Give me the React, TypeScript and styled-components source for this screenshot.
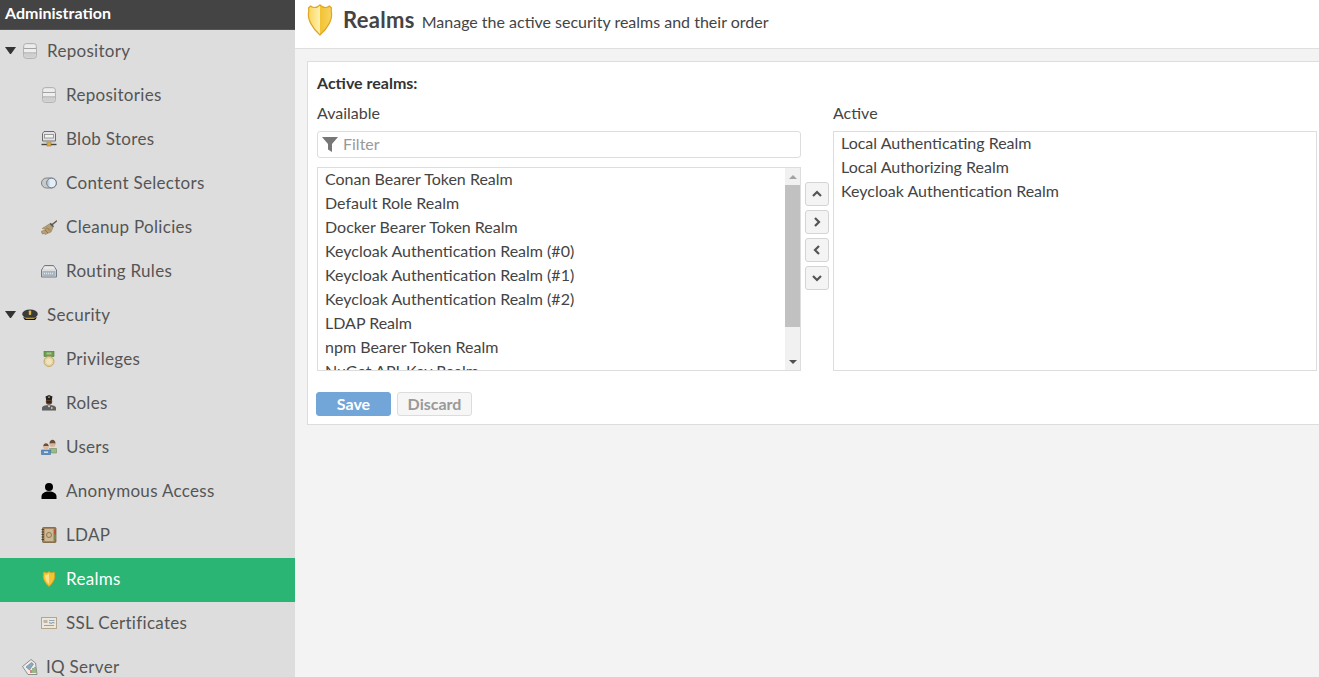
import React from 'react'
import styled, { createGlobalStyle } from 'styled-components'

const GlobalStyle = createGlobalStyle`
  html, body {
    margin: 0;
    height: 100%;
    overflow: hidden;
    background: #f3f3f3;
    font-family: "Lato", "Open Sans", sans-serif;
  }
  * { box-sizing: border-box; }
`

const Page = styled.div`
  display: flex;
  width: 1319px;
  height: 677px;
  overflow: hidden;
`

const Sidebar = styled.nav`
  flex: 0 0 295px;
  height: 677px;
  overflow: hidden;
  background: #dddddd;
`

const SidebarTitle = styled.div`
  height: 30px;
  padding: 0 5px;
  line-height: 25px;
  font-size: 16px;
  font-weight: 700;
  color: #fff;
  background: #444444;
  border-bottom: 1px solid #555;
`

const NavRow = styled.div<{ $depth: number; $active?: boolean }>`
  display: flex;
  align-items: center;
  height: 44px;
  padding-left: ${({ $depth }) => ($depth === 0 ? 5 : 41)}px;
  padding-bottom: 3px;
  font-size: 17px;
  letter-spacing: 0.3px;
  color: ${({ $active }) => ($active ? '#fff' : '#555')};
  background: ${({ $active }) => ($active ? '#2ab574' : 'transparent')};
`

const Caret = styled.span<{ $hidden?: boolean }>`
  flex: 0 0 11px;
  width: 0;
  height: 0;
  margin-right: 6px;
  border-left: 5.5px solid transparent;
  border-right: 5.5px solid transparent;
  border-top: 7px solid ${({ $hidden }) => ($hidden ? 'transparent' : '#333')};
`

const NavIcon = styled.svg`
  flex: 0 0 16px;
  width: 16px;
  height: 16px;
  margin-right: 9px;
`

const TightNavIcon = styled(NavIcon)`
  margin-right: 8px;
`

const Main = styled.main`
  flex: 1;
  min-width: 0;
  display: flex;
  flex-direction: column;
`

const Header = styled.header`
  display: flex;
  align-items: center;
  height: 49px;
  padding: 0 0 8px 12px;
  background: #fff;
  border-bottom: 1px solid #dfdfdf;
`

const HeaderIcon = styled.svg`
  width: 26px;
  height: 32px;
  margin-right: 10px;
`

const Title = styled.h1`
  margin: 0 7px 2px 0;
  font-size: 22px;
  font-weight: 700;
  letter-spacing: 0.3px;
  color: #444;
`

const Subtitle = styled.span`
  font-size: 16px;
  color: #444;
  padding-top: 3px;
`

const Panel = styled.section`
  margin: 12px -6px 0 12px;
  height: 364px;
  padding: 11px 9px 0;
  background: #fff;
  border: 1px solid #dddddd;
`

const SectionTitle = styled.div`
  height: 22px;
  line-height: 19px;
  font-size: 16px;
  font-weight: 700;
  color: #333;
`

const Selector = styled.div`
  display: grid;
  grid-template-columns: 484px 32px 484px;
  margin-top: 8px;
`

const Column = styled.div`
  display: flex;
  flex-direction: column;
`

const FieldLabel = styled.div`
  height: 22px;
  line-height: 20px;
  font-size: 16px;
  color: #444;
`

const FilterBox = styled.div`
  display: flex;
  align-items: center;
  height: 27px;
  margin: 6px 0 9px;
  padding: 0 0 2px 4px;
  border: 1px solid #ddd;
  border-radius: 3px;
  font-size: 16px;
  color: #999;
  background: #fff;
`

const FilterIcon = styled.svg`
  width: 16px;
  height: 16px;
  margin-right: 5px;
`

const ListBox = styled.div<{ $tall?: boolean }>`
  display: flex;
  height: ${({ $tall }) => ($tall ? 240 : 204)}px;
  margin-top: ${({ $tall }) => ($tall ? 6 : 0)}px;
  overflow: hidden;
  border: 1px solid #ddd;
  background: #fff;
`

const ListItems = styled.div`
  flex: 1;
  min-width: 0;
  overflow: hidden;
`

const ListItem = styled.div`
  height: 24px;
  padding-left: 7px;
  line-height: 22px;
  font-size: 16px;
  color: #444;
  white-space: nowrap;
`

const ScrollBar = styled.div`
  flex: 0 0 15px;
  display: flex;
  flex-direction: column;
  background: #f1f1f1;
`

const ScrollArrow = styled.div<{ $down?: boolean }>`
  flex: 0 0 17px;
  display: flex;
  align-items: center;
  justify-content: center;

  &::before {
    content: '';
    width: 0;
    height: 0;
    border-left: 4px solid transparent;
    border-right: 4px solid transparent;
    ${({ $down }) => ($down ? 'border-top: 4px solid #505050;' : 'border-bottom: 4px solid #a3a3a3;')}
  }
`

const ScrollTrack = styled.div`
  flex: 1;
`

const ScrollThumb = styled.div`
  height: 142px;
  background: #c1c1c1;
`

const MoveButtons = styled.div`
  display: flex;
  flex-direction: column;
  gap: 4px;
  padding: 79px 0 0 4px;
`

const MoveButton = styled.button`
  display: flex;
  align-items: center;
  justify-content: center;
  width: 24px;
  height: 24px;
  padding: 0;
  background: #f4f4f4;
  border: 1px solid #d4d4d4;
  border-radius: 3px;
`

const Actions = styled.div`
  display: flex;
  gap: 6px;
  margin: 21px 0 0 -1px;
`

const ActionButton = styled.button<{ $primary?: boolean }>`
  width: 75px;
  height: 24px;
  padding: 0 0 2px;
  font-family: inherit;
  font-size: 16px;
  font-weight: 700;
  color: ${({ $primary }) => ($primary ? '#fff' : '#999')};
  background: ${({ $primary }) => ($primary ? '#72a6d9' : '#f6f6f6')};
  border: 1px solid ${({ $primary }) => ($primary ? '#72a6d9' : '#dcdcdc')};
  border-radius: 3px;
`

const Db = () => (
  <NavIcon viewBox="0 0 16 16">
    <rect x="1.500" y=".5" width="13" height="15" rx="3" fill="#d9d9d9" stroke="#b3b3b3" />
    <rect x="2.500" y="1.500" width="11" height="3.500" rx="1.500" fill="#ececec" />
    <rect x="2" y="6" width="12" height="3.500" fill="#eeeeee" />
    <path d="M2 5.500h12M2 10h12" stroke="#a3a3a3" />
    <rect x="2.500" y="10.500" width="11" height="4" rx="1.500" fill="#cfcfcf" />
  </NavIcon>
)

const Blob = () => (
  <NavIcon viewBox="0 0 16 16">
    <path d="M3 .5h10l1.500 2v7.500h-13V2.500z" fill="#e2e2e2" stroke="#6d6d6d" />
    <rect x="3.500" y="3.500" width="9" height="3.500" fill="#f4f4f4" stroke="#888" strokeWidth=".8" />
    <path d="M.5 13.500h15" stroke="#444" strokeWidth="1.400" />
    <rect x="6" y="11" width="4" height="4" fill="#e2a93c" stroke="#a97a26" strokeWidth=".6" />
    <path d="M2 10.800h12" stroke="#aaa" />
  </NavIcon>
)

const Selectors = () => (
  <NavIcon viewBox="0 0 16 16">
    <rect x=".5" y="3" width="15" height="10" rx="5" fill="#c9c9c9" stroke="#808080" />
    <circle cx="10.500" cy="8" r="4.800" fill="#e6eef5" stroke="#6d7f91" />
    <path d="M8.500 3.500a5 5 0 0 0 0 9" fill="#bcd0e2" stroke="#6d7f91" strokeWidth=".8" />
  </NavIcon>
)

const Broom = () => (
  <NavIcon viewBox="0 0 16 16">
    <path d="M15.800 1 10 5.500l1 1.300L16 2.500z" fill="#6b5a48" />
    <path d="M9.800 3.800 13 7.200l-1 1.200-3.700-3.300z" fill="#4f5866" />
    <path d="M8.300 5 12 8.500 10 13l-6 2.500-1-1.300-1.500 1-1.300-2.800L5.500 10 1.200 9.500z" fill="#b79e73" stroke="#86724f" strokeWidth=".5" />
    <path d="m6 8.500 3 3M4 11l3 3" stroke="#76643f" strokeWidth=".7" />
  </NavIcon>
)

const Routing = () => (
  <NavIcon viewBox="0 0 16 16">
    <path d="M3.500 2.500h9L15.500 7v7H.5V7z" fill="#dcdcdc" stroke="#6f7b88" />
    <path d="M2.500 5h11" stroke="#f4f4f4" />
    <rect x="1.500" y="8" width="13" height="5" fill="#aab4be" />
    <path d="M3 10.500h10" stroke="#e8e8e8" strokeDasharray="1 1" strokeWidth="1.400" />
  </NavIcon>
)

const Cap = () => (
  <NavIcon viewBox="0 0 16 16">
    <ellipse cx="8" cy="7" rx="7.800" ry="4.600" fill="#3a3a3a" />
    <rect x="6.800" y="3.500" width="2.400" height="4.500" rx=".8" fill="#d9b94a" />
    <path d="M1 10.200c2 1 12 1 14 0L13 13H3z" fill="#111" />
    <path d="M3.500 11.300h9" stroke="#d9b94a" strokeWidth="1.100" />
  </NavIcon>
)

const Medal = () => (
  <NavIcon viewBox="0 0 16 16">
    <rect x="3" y="0" width="10" height="5.500" fill="#6c9d50" stroke="#4f7c3c" strokeWidth=".6" />
    <rect x="5.500" y="1.500" width="5" height="2" fill="#a5c58c" />
    <circle cx="8" cy="10.500" r="5" fill="#e6d39b" stroke="#c2a86c" />
    <circle cx="8" cy="10.500" r="3" fill="#efe2bd" />
  </NavIcon>
)

const Officer = () => (
  <NavIcon viewBox="0 0 16 16">
    <path d="M1 15.500v-2.500c0-2 3-3 7-3s7 1 7 3v2.500z" fill="#5f6063" />
    <path d="M1 15h14v1H1z" fill="#9a9a9a" />
    <circle cx="8" cy="6.500" r="3.200" fill="#5a3d2b" />
    <path d="M4.500 1.500 8 0l3.500 1.500-.7 3.500H5.200z" fill="#222" />
    <rect x="7.300" y="1.400" width="1.400" height="1.500" fill="#e2c04a" />
    <path d="M6 7h4" stroke="#111" />
    <path d="M6.500 10.500 8 12.500l1.500-2z" fill="#eee" />
    <rect x="10" y="12" width="1.500" height="2" fill="#e2c04a" />
  </NavIcon>
)

const UsersIcon = () => (
  <NavIcon viewBox="0 0 16 16">
    <path d="M8.500 9.500h7v4.500h-5z" fill="#9cb98b" stroke="#6e8d5c" strokeWidth=".6" />
    <circle cx="11.500" cy="5" r="3" fill="#d8b595" />
    <path d="M8.500 4.500c0-5 6-5 6 0-2-.5-4-.5-6 0z" fill="#6e4d35" />
    <path d="M.5 11h9v4.500h-9z" fill="#5d8fc0" stroke="#3d6c9b" strokeWidth=".6" />
    <rect x="3" y="12.500" width="4" height="1.300" fill="#e9f0f7" />
    <circle cx="5" cy="7.800" r="2.700" fill="#dcbba0" />
    <path d="M2.300 7.300c0-4 5.400-4 5.400 0-1.800-.5-3.600-.5-5.400 0z" fill="#6e4d35" />
  </NavIcon>
)

const Person = () => (
  <NavIcon viewBox="0 0 16 16">
    <circle cx="8" cy="4" r="4" fill="#000" />
    <path d="M.5 16v-2.500C.5 10.500 3.500 8.500 8 8.500s7.500 2 7.500 5V16z" fill="#000" />
  </NavIcon>
)

const Book = () => (
  <NavIcon viewBox="0 0 16 16">
    <rect x="1.500" y=".5" width="13.500" height="15" rx="1" fill="#9a7a50" stroke="#6f5434" strokeWidth=".7" />
    <rect x="3.500" y="1.800" width="9" height="12.400" fill="#cdb895" />
    <rect x="13" y="3" width="2" height="4" fill="#b5523a" />
    <rect x="13" y="8" width="2" height="4" fill="#6f8f4f" />
    <circle cx="8" cy="8" r="2.500" fill="none" stroke="#8d7650" />
    <path d="M.5 2.500h2.500M.5 5h2.500M.5 7.500h2.500M.5 10h2.500M.5 12.500h2.500" stroke="#333" strokeWidth=".8" />
  </NavIcon>
)

const shieldPath = 'M13 1c-1.500 1.500-3.500 2.500-5.500 2.500C6 3.500 4.500 3 3.500 2L1.500 4c.5 1.500.5 3 0 5-1 6 3.500 15 11.500 22 8-7 12.500-16 11.500-22-.5-2-.5-3.500 0-5l-2-2c-1 1-2.500 1.500-4 1.500C16.500 3.500 14.500 2.500 13 1z'

const SmallShield = () => (
  <NavIcon viewBox="0 0 26 32">
    <path d={shieldPath} fill="#f6c430" stroke="#d99a1f" strokeWidth="1.600" />
    <path d="M13 5v21c-5-4-8-10-8-18 3 .5 6-1 8-3z" fill="#fbe38c" />
  </NavIcon>
)

const Certificate = () => (
  <NavIcon viewBox="0 0 16 16">
    <rect x=".5" y="2.500" width="15" height="11" fill="#ece7dc" stroke="#b5a58c" />
    <rect x="2.500" y="5" width="4" height="3" fill="#bdb5a6" />
    <path d="M8 5.500h5.500M3 10.500h10" stroke="#9aa5ad" />
    <path d="M8 8c1-1 2 1 3 0s2 0 2.500 0" stroke="#5f88ad" fill="none" />
  </NavIcon>
)

const Tags = () => (
  <TightNavIcon viewBox="0 0 16 16">
    <path d="M.5 7.500 9 .5l4.500 3.500 1.500 11.500H6z" fill="#ededed" stroke="#777" strokeWidth=".8" />
    <path d="M4 8 9.500 3.500l2 1.500-4 6z" fill="#8ea7bd" stroke="#5f7487" strokeWidth=".5" />
    <path d="M11 9v5M13 8v6" stroke="#6e9a50" strokeWidth="1.300" />
    <path d="M9 11v3" stroke="#c0503a" strokeWidth="1.300" />
  </TightNavIcon>
)

type NavEntry = { label: string; icon: React.FC; depth: number; caret?: boolean; active?: boolean }

const navEntries: NavEntry[] = [
  { label: 'Repository', icon: Db, depth: 0, caret: true },
  { label: 'Repositories', icon: Db, depth: 1 },
  { label: 'Blob Stores', icon: Blob, depth: 1 },
  { label: 'Content Selectors', icon: Selectors, depth: 1 },
  { label: 'Cleanup Policies', icon: Broom, depth: 1 },
  { label: 'Routing Rules', icon: Routing, depth: 1 },
  { label: 'Security', icon: Cap, depth: 0, caret: true },
  { label: 'Privileges', icon: Medal, depth: 1 },
  { label: 'Roles', icon: Officer, depth: 1 },
  { label: 'Users', icon: UsersIcon, depth: 1 },
  { label: 'Anonymous Access', icon: Person, depth: 1 },
  { label: 'LDAP', icon: Book, depth: 1 },
  { label: 'Realms', icon: SmallShield, depth: 1, active: true },
  { label: 'SSL Certificates', icon: Certificate, depth: 1 },
  { label: 'IQ Server', icon: Tags, depth: 0 },
]

const availableRealms = [
  'Conan Bearer Token Realm',
  'Default Role Realm',
  'Docker Bearer Token Realm',
  'Keycloak Authentication Realm (#0)',
  'Keycloak Authentication Realm (#1)',
  'Keycloak Authentication Realm (#2)',
  'LDAP Realm',
  'npm Bearer Token Realm',
  'NuGet API-Key Realm',
]

const activeRealms = ['Local Authenticating Realm', 'Local Authorizing Realm', 'Keycloak Authentication Realm']

const chevrons = ['M2 8l4-4 4 4', 'M4 2l4 4-4 4', 'M8 2 4 6l4 4', 'M2 4l4 4 4-4']

export default function App() {
  return (
    <Page>
      <GlobalStyle />
      <Sidebar>
        <SidebarTitle>Administration</SidebarTitle>
        {navEntries.map(({ label, icon: Icon, depth, caret, active }) => (
          <NavRow key={label} $depth={depth} $active={active}>
            {depth === 0 && <Caret $hidden={!caret} />}
            <Icon />
            {label}
          </NavRow>
        ))}
      </Sidebar>
      <Main>
        <Header>
          <HeaderIcon viewBox="0 0 26 32">
            <defs>
              <linearGradient id="shield" x1="0" y1="0" x2="1" y2="0">
                <stop offset="0" stopColor="#f9d65a" />
                <stop offset="0.5" stopColor="#fff0b0" />
                <stop offset="0.5" stopColor="#f3c233" />
                <stop offset="1" stopColor="#f7d460" />
              </linearGradient>
            </defs>
            <path d={shieldPath} fill="url(#shield)" stroke="#dfa526" strokeWidth="1.200" />
          </HeaderIcon>
          <Title>Realms</Title>
          <Subtitle>Manage the active security realms and their order</Subtitle>
        </Header>
        <Panel>
          <SectionTitle>Active realms:</SectionTitle>
          <Selector>
            <Column>
              <FieldLabel>Available</FieldLabel>
              <FilterBox>
                <FilterIcon viewBox="0 0 16 16">
                  <path d="M0 1h16L10 8v8l-4-2.500V8z" fill="#777" />
                </FilterIcon>
                Filter
              </FilterBox>
              <ListBox>
                <ListItems>
                  {availableRealms.map((realm) => (
                    <ListItem key={realm}>{realm}</ListItem>
                  ))}
                </ListItems>
                <ScrollBar>
                  <ScrollArrow />
                  <ScrollTrack>
                    <ScrollThumb />
                  </ScrollTrack>
                  <ScrollArrow $down />
                </ScrollBar>
              </ListBox>
            </Column>
            <MoveButtons>
              {chevrons.map((d) => (
                <MoveButton key={d}>
                  <svg width="12" height="12" viewBox="0 0 12 12">
                    <path d={d} fill="none" stroke="#555" strokeWidth="2.200" />
                  </svg>
                </MoveButton>
              ))}
            </MoveButtons>
            <Column>
              <FieldLabel>Active</FieldLabel>
              <ListBox $tall>
                <ListItems>
                  {activeRealms.map((realm) => (
                    <ListItem key={realm}>{realm}</ListItem>
                  ))}
                </ListItems>
              </ListBox>
            </Column>
          </Selector>
          <Actions>
            <ActionButton $primary>Save</ActionButton>
            <ActionButton>Discard</ActionButton>
          </Actions>
        </Panel>
      </Main>
    </Page>
  )
}
